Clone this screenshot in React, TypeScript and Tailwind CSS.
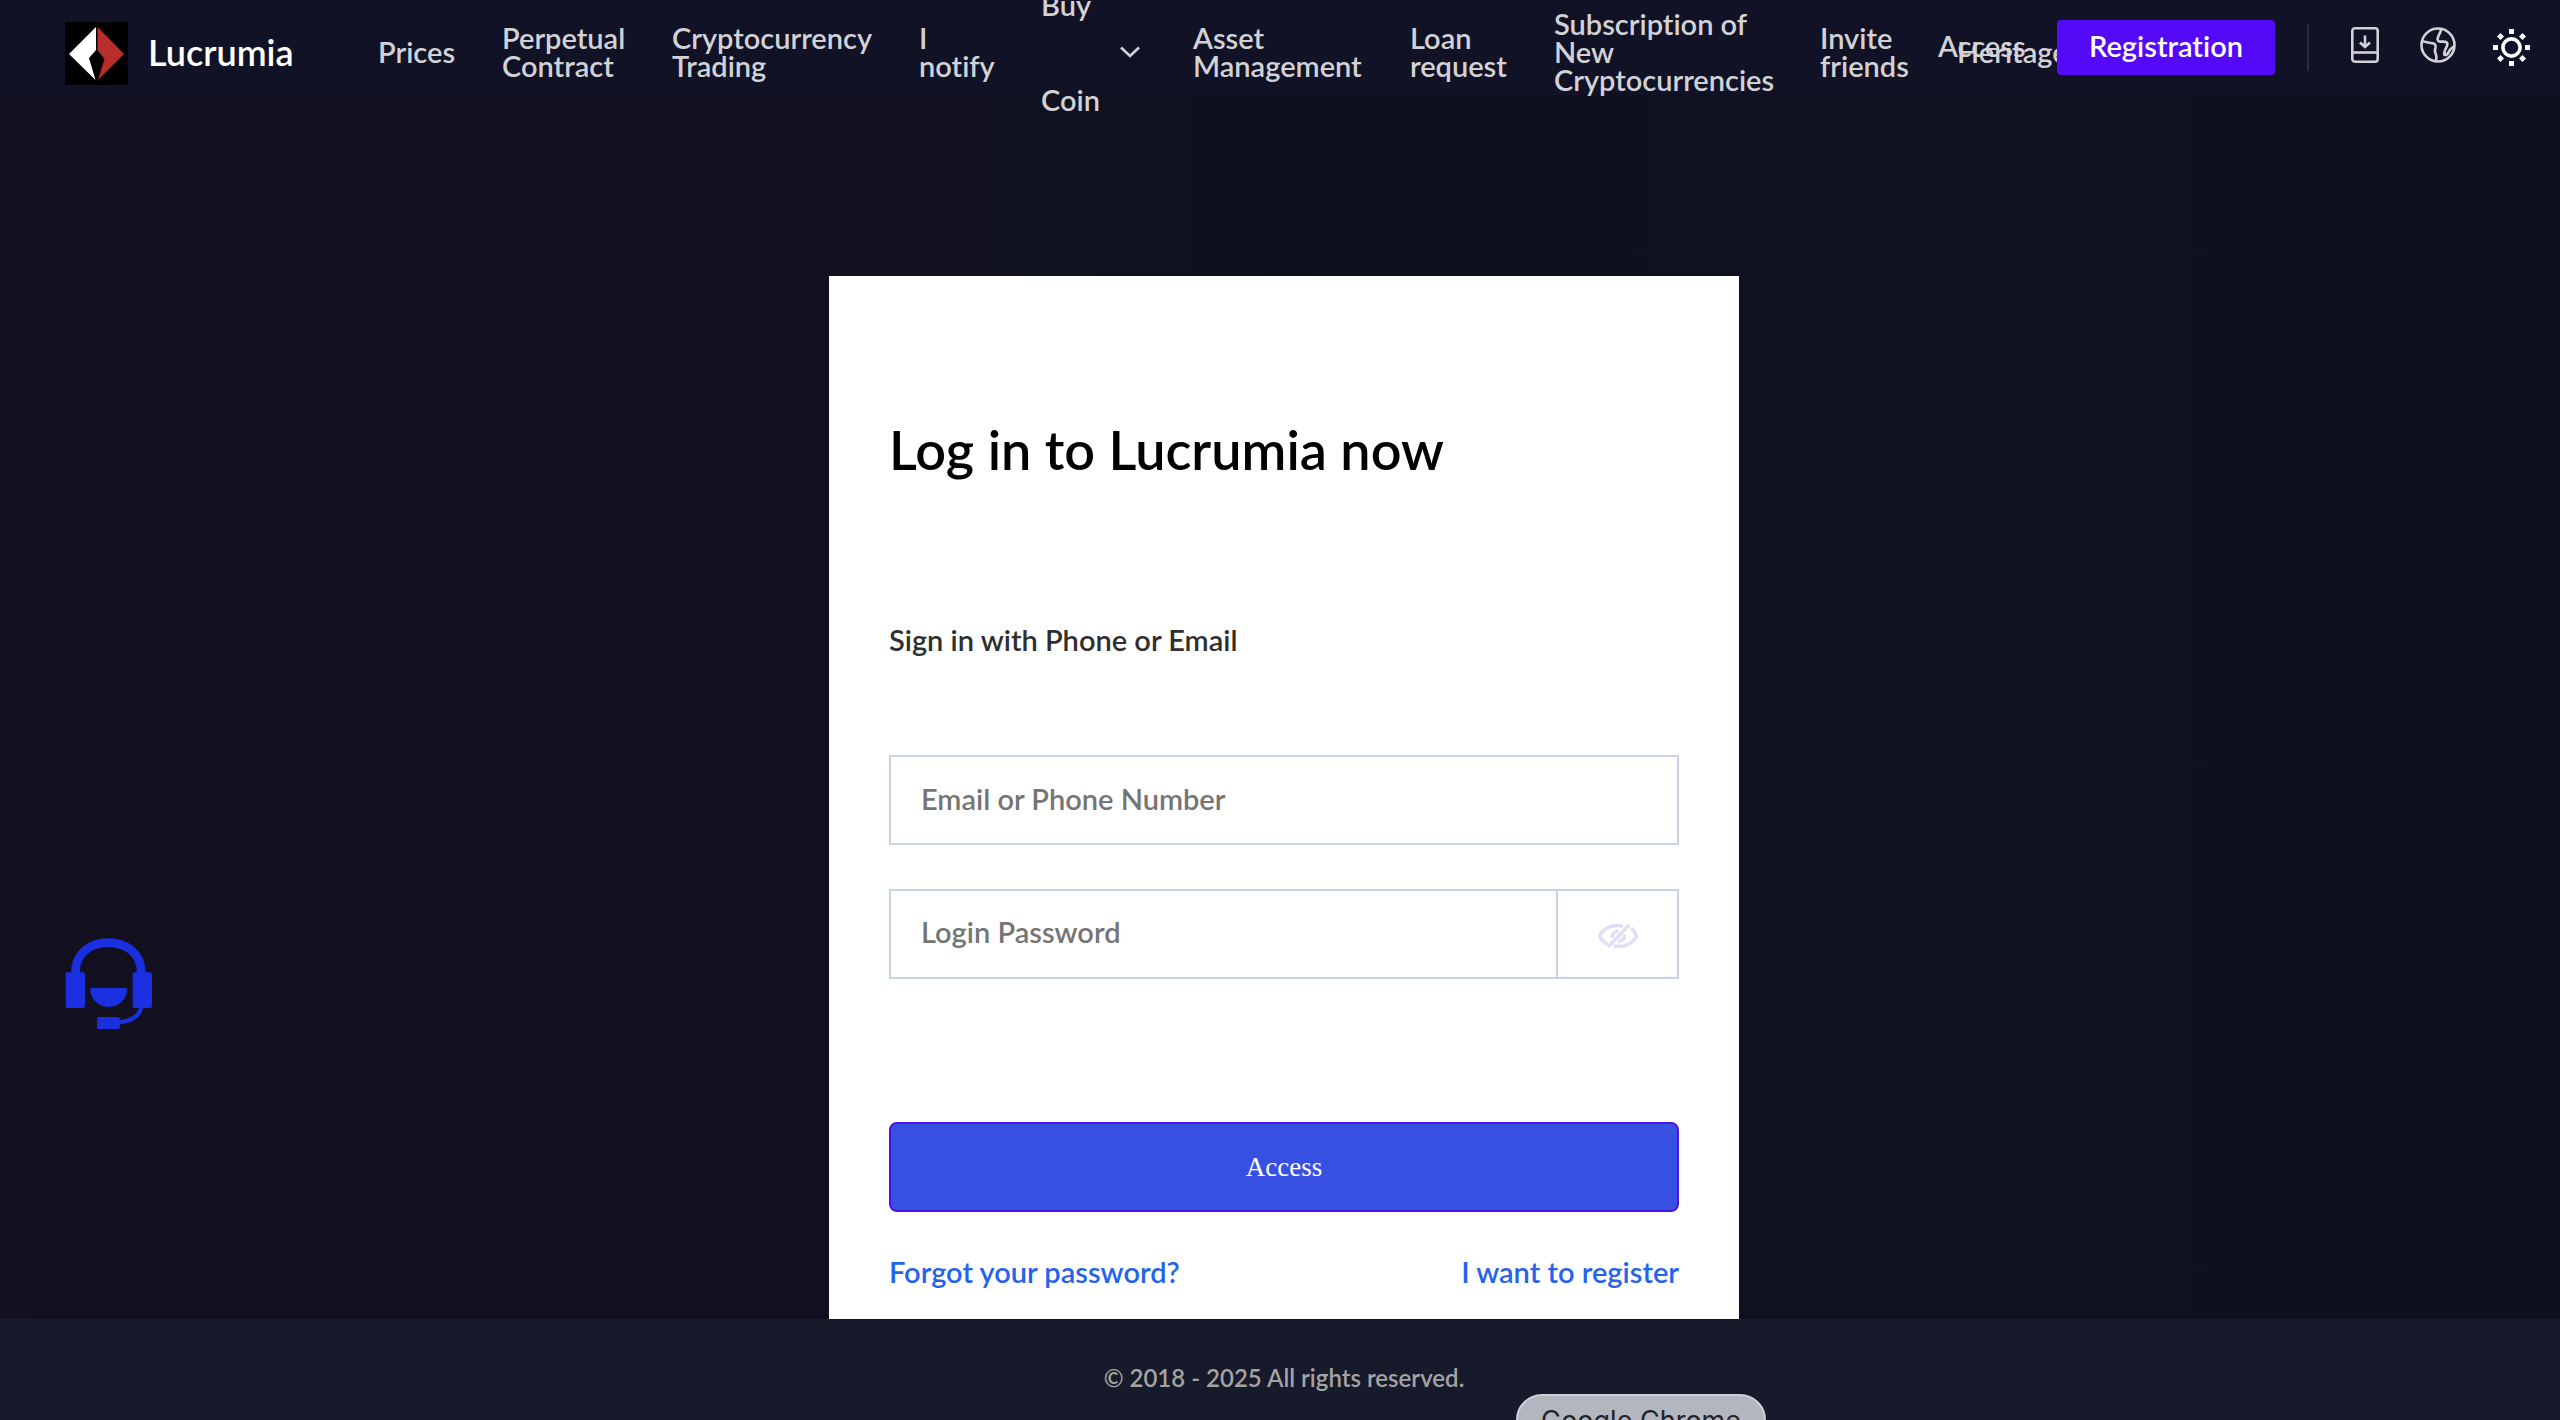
import { FormEvent, useState } from "react";
import clsx from "clsx";

interface NavItem {
  label: string;
  width: string;
}

const navBefore: NavItem[] = [
  { label: "Prices", width: "w-[124px]" },
  { label: "Perpetual Contract", width: "w-[170px]" },
  { label: "Cryptocurrency Trading", width: "w-[247px]" },
  { label: "I notify", width: "w-[122px]" },
];

const navAfter: NavItem[] = [
  { label: "Asset Management", width: "w-[217px]" },
  { label: "Loan request", width: "w-[144px]" },
  { label: "Subscription of New Cryptocurrencies", width: "w-[266px]" },
  { label: "Invite friends", width: "w-[137px]" },
  { label: "Heritage", width: "w-[150px]" },
];

const Logo = () => (
  <svg viewBox="0 0 63 63" className="size-[63px] shrink-0 bg-black" aria-hidden="true">
    <path d="M31 5 L4 32 L30.500 58 L24 36 L31 28 Z" fill="#fff" />
    <path d="M32.500 5 L59 32 L33 58 L39.500 37 L32.500 28 Z" fill="#b82e2a" />
  </svg>
);

const DownloadIcon = () => (
  <svg viewBox="0 0 28 36" className="h-9 w-7" fill="none" stroke="currentColor" strokeWidth="2.600">
    <rect x="1.300" y="1.300" width="25.400" height="33.400" rx="2.600" />
    <path d="M1 25.500 H27" />
    <path d="M14 8.500 V20 M9 15.500 L14 20 L19 15.500" />
  </svg>
);

const GlobeIcon = () => (
  <svg viewBox="0 0 36 36" className="size-9" fill="none" stroke="currentColor" strokeWidth="2.600" strokeLinejoin="round">
    <circle cx="18" cy="18" r="16.500" />
    <path d="M2.500 14.500 C6 14.500 9 16 12.500 16.300 C15 16.500 15.800 18 15.500 20.500 C14.800 23 14.500 25 15.800 27 C16.800 29 16.400 31.500 16 34" />
    <path d="M21 2.500 C21 5 19.500 6.500 18.500 9 C17.300 11.500 17 14 19.500 14.600 C22 14.800 25.500 14 27 15.600 C28.300 17.500 26.500 20 25.500 22 C24.500 24.500 23.800 26.500 24.500 28 C28 28.500 28.500 25 29.800 23 C31 21.500 32.800 20.500 34.300 19" />
  </svg>
);

const SunIcon = () => (
  <svg viewBox="0 0 37 37" className="size-[37px]" fill="currentColor">
    <circle cx="18.500" cy="18.500" r="8.600" fill="none" stroke="currentColor" strokeWidth="3.600" />
    <path d="M16 0 h5 v5 h-5 Z M16 32 h5 v5 h-5 Z M0 16 h5 v5 h-5 Z M32 16 h5 v5 h-5 Z" />
    <path d="M7.500 4 l3.500 3.500 l-3.500 3.500 l-3.500 -3.500 Z M29.500 4 l3.500 3.500 l-3.500 3.500 l-3.500 -3.500 Z M7.500 26 l3.500 3.500 l-3.500 3.500 l-3.500 -3.500 Z M29.500 26 l3.500 3.500 l-3.500 3.500 l-3.500 -3.500 Z" />
  </svg>
);

const EyeOffIcon = () => (
  <svg viewBox="0 0 40 24" className="h-6 w-10" fill="none" stroke="currentColor" strokeWidth="3.600">
    <path d="M25 2.300 C14 -0.500 5 4.500 1.500 12 C3.500 16 6 18.500 9.500 20.500" />
    <path d="M33 4 C35.500 6 37.500 8.500 38.500 12 C35 19.500 26 24.500 15.500 21.800" />
    <path d="M31 1 L10 23" />
    <path d="M14 14 C13.500 10.500 16 7.500 20.500 7" />
    <path d="M26.500 10.500 C26.500 14.500 24 17 20 17.300" />
  </svg>
);

const HeadsetIcon = () => (
  <svg viewBox="75 84 264 276" className="h-[92px] w-[88px]" fill="#1a2fe0">
    <path d="M106 190 C106 130 150 98 205 98 C260 98 304 130 304 190" fill="none" stroke="#1a2fe0" strokeWidth="26" />
    <rect x="77" y="187" width="58" height="107" rx="6" />
    <rect x="278" y="187" width="58" height="107" rx="6" />
    <path d="M156 234 H256 Q262 234 262 241 C259 270 235 291 206 291 C177 291 153 270 150 241 Q150 234 156 234 Z" />
    <rect x="171" y="321" width="69" height="36" rx="6" />
    <path d="M304 290 C300 318 272 334 238 336" fill="none" stroke="#1a2fe0" strokeWidth="13" />
  </svg>
);

const NavLink = ({ label, width }: NavItem) => (
  <li className={clsx("shrink-0", width)}>
    <a href="#" className="block pr-12">
      {label}
    </a>
  </li>
);

const Header = () => (
  <header className="flex h-[95px] bg-[#111226] pr-[30px] pl-[65px] text-[29px] leading-7 font-semibold text-[#d2d2d6]">
    <a href="#" className="flex w-[313px] shrink-0 items-center gap-5 pt-3 text-4xl text-white">
      <Logo />
      <span className="pb-1">Lucrumia</span>
    </a>
    <nav className="min-w-0 flex-1 pt-2">
      <ul className="flex h-full items-center">
        {navBefore.map((item) => (
          <NavLink key={item.label} {...item} />
        ))}
        <li className="w-[152px] shrink-0">
          <button type="button" className="flex items-center gap-[23px] text-left leading-[95px]">
            <span className="w-14">Buy Coin</span>
            <svg viewBox="0 0 20 12" className="h-3 w-5" fill="none" stroke="currentColor" strokeWidth="2.600">
              <path d="M1 1.500 L10 10 L19 1.500" />
            </svg>
          </button>
        </li>
        {navAfter.map((item) => (
          <NavLink key={item.label} {...item} />
        ))}
      </ul>
    </nav>
    <div className="flex shrink-0 items-center">
      <a href="#" className="w-[119px] pb-1">
        Access
      </a>
      <button type="button" className="h-[55px] w-[218px] rounded bg-[#5409f7] pb-1 text-white">
        Registration
      </button>
      <span className="ml-8 h-[47px] w-0.5 bg-[#2a2b3d]" />
      <button type="button" aria-label="Download app" className="ml-[42px] pb-1.5">
        <DownloadIcon />
      </button>
      <button type="button" aria-label="Language" className="ml-[41px] pb-1.5">
        <GlobeIcon />
      </button>
      <button type="button" aria-label="Theme" className="ml-[37px] text-white">
        <SunIcon />
      </button>
    </div>
  </header>
);

const LoginForm = () => {
  const [visible, setVisible] = useState(false);

  const handleSubmit = (e: FormEvent) => {
    e.preventDefault();
  };

  return (
    <div className="w-[910px] max-w-full bg-white px-[60px] pt-[138px] pb-[27px] text-[29px] leading-10 font-semibold">
      <h1 className="text-[54px] leading-[72px] text-black">Log in to Lucrumia now</h1>
      <p className="mt-[134px] text-[#2f2f2f]">Sign in with Phone or Email</p>
      <form onSubmit={handleSubmit} className="mt-[95px]">
        <input
          type="text"
          aria-label="Email or Phone Number"
          placeholder="Email or Phone Number"
          className="block h-[90px] w-full border-2 border-[#c8d3e3] px-[30px] pb-1 text-[#2f2f2f] outline-none placeholder:text-[#757575]"
        />
        <div className="mt-11 flex h-[90px] border-2 border-[#c8d3e3]">
          <input
            type={visible ? "text" : "password"}
            aria-label="Login Password"
            placeholder="Login Password"
            className="min-w-0 flex-1 px-[30px] pb-1 text-[#2f2f2f] outline-none placeholder:text-[#757575]"
          />
          <button
            type="button"
            aria-label="Show password"
            onClick={() => setVisible(!visible)}
            className="flex w-[121px] items-center justify-center border-l-2 border-[#c8d3e3] pt-1 text-[#dfe0f2]"
          >
            <EyeOffIcon />
          </button>
        </div>
        <button
          type="submit"
          className="mt-[143px] h-[90px] w-full rounded-lg border-2 border-[#4a12ee] bg-[#3850e2] font-['Liberation_Serif',serif] text-[27px] font-normal text-white"
        >
          Access
        </button>
      </form>
      <div className="mt-10 flex justify-between text-[#2563eb]">
        <a href="#">Forgot your password?</a>
        <a href="#">I want to register</a>
      </div>
    </div>
  );
};

const App = () => {
  return (
    <div className="flex min-h-screen flex-col overflow-hidden bg-linear-to-r from-[#131020] via-[#0f101e] to-[#0e111d] font-['Lato',sans-serif] [font-variant-ligatures:none]">
      <Header />
      <main className="flex justify-center pt-[181px] pl-2">
        <LoginForm />
      </main>
      <footer className="flex-1 bg-[#171a2a] pt-[43px] pl-2 text-center text-2xl font-semibold text-[#a3a3a3]">
        © 2018 - 2025 All rights reserved.
      </footer>
      <button type="button" aria-label="Support chat" className="fixed bottom-[390px] left-[65px]">
        <HeadsetIcon />
      </button>
      <div className="fixed bottom-[-26px] left-[1516px] flex h-[52px] w-[250px] items-center justify-center rounded-[26px] border-2 border-[#cfd0da] bg-[#b3b5bf] pt-0.5 font-['Inter',sans-serif] text-[27px] text-[#222326]">
        Google Chrome
      </div>
    </div>
  );
};

export default App;
